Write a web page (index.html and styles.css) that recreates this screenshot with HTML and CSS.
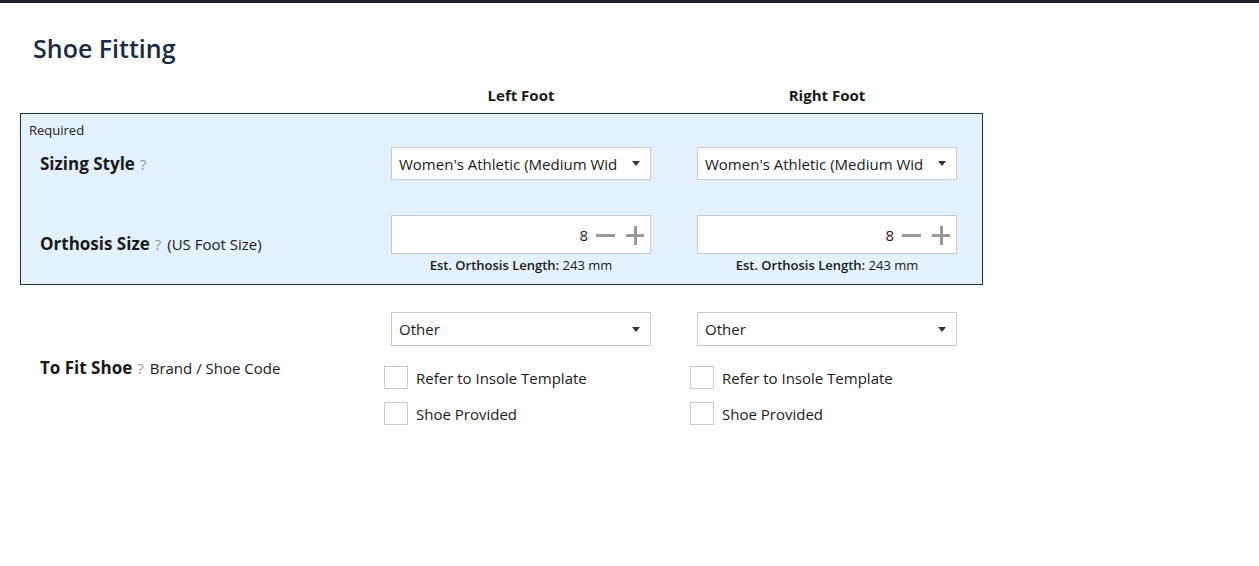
FILE: index.html
```html
<!DOCTYPE html>
<html>
<head>
<meta charset="utf-8">
<title>Shoe Fitting</title>
<link rel="stylesheet" href="styles.css">
</head>
<body>
<div class="topbar"></div>
<div class="page">
  <h1 class="title">Shoe Fitting</h1>
  <div class="grid headers">
    <div></div>
    <div class="colhead">Left Foot</div>
    <div class="colhead">Right Foot</div>
  </div>
  <div class="required-box">
    <div class="req-label">Required</div>
    <div class="grid row-sizing">
      <div class="label"><b>Sizing Style</b><span class="q">?</span></div>
      <div class="select"><span class="sel-text">Women's Athletic (Medium Width)</span><span class="arrow"></span></div>
      <div class="select"><span class="sel-text">Women's Athletic (Medium Width)</span><span class="arrow"></span></div>
    </div>
    <div class="grid row-size">
      <div class="label size-label"><b>Orthosis Size</b><span class="q">?</span><span class="sub">(US Foot Size)</span></div>
      <div class="size-cell">
        <div class="stepper"><span class="num">8</span><span class="minus"></span><span class="plus"></span></div>
        <div class="est"><b>Est. Orthosis Length:</b> 243 mm</div>
      </div>
      <div class="size-cell">
        <div class="stepper"><span class="num">8</span><span class="minus"></span><span class="plus"></span></div>
        <div class="est"><b>Est. Orthosis Length:</b> 243 mm</div>
      </div>
    </div>
  </div>
  <div class="grid row-shoe">
    <div class="label"><b>To Fit Shoe</b><span class="q">?</span><span class="sub">Brand / Shoe Code</span></div>
    <div class="shoe-cell">
      <div class="select tall"><span class="sel-text">Other</span><span class="arrow"></span></div>
      <label class="check first"><span class="box"></span>Refer to Insole Template</label>
      <label class="check"><span class="box"></span>Shoe Provided</label>
    </div>
    <div class="shoe-cell">
      <div class="select tall"><span class="sel-text">Other</span><span class="arrow"></span></div>
      <label class="check first"><span class="box"></span>Refer to Insole Template</label>
      <label class="check"><span class="box"></span>Shoe Provided</label>
    </div>
  </div>
</div>
</body>
</html>
```
FILE: styles.css
```css
* { box-sizing: border-box; }
html, body { margin: 0; padding: 0; background: #fff; }
body {
  font-family: "Segoe UI", "Open Sans", "Noto Sans", sans-serif;
  color: #1a1a1a;
  font-size: 15px;
}
.topbar { height: 3px; background: #1c2232; }
.page { padding-left: 20px; }
.title {
  margin: 29px 0 0 13px;
  font-size: 25px;
  line-height: 32px;
  font-weight: 600;
  color: #1b2b40;
}
.grid {
  display: grid;
  grid-template-columns: 324px 260px 260px;
  column-gap: 46px;
}
.headers { margin-top: 21px; padding-left: 1px; height: 20px; margin-bottom: 8px; }
.colhead { text-align: center; font-weight: 700; font-size: 15px; line-height: 20px; }
.required-box {
  width: 963px;
  border: 1px solid #1b2f47;
  background: #e4f0fa;
  padding: 8px 0 11px 0;
}
.req-label { font-size: 13px; line-height: 16px; padding-left: 8px; color: #222; }
.row-sizing { margin-top: 9px; align-items: center; }
.label { padding-left: 19px; font-size: 17px; display: flex; align-items: baseline; white-space: nowrap; }
.label b { font-weight: 700; }
.q { color: #999; font-size: 15px; margin-left: 5px; }
.sub { font-size: 15px; margin-left: 6px; }
.select {
  height: 33px;
  background: #fff;
  border: 1px solid #ccc;
  display: flex;
  align-items: center;
  padding: 0 10px 0 7px;
  font-size: 15px;
}
.select.tall { height: 34px; }
.sel-text { flex: 1; white-space: nowrap; overflow: hidden; }
.arrow {
  width: 0; height: 0;
  border-left: 4.5px solid transparent;
  border-right: 4.5px solid transparent;
  border-top: 5px solid #333;
  margin-left: 15px;
}
.row-size { margin-top: 35px; }
.size-label { align-self: start; margin-top: 17px; }
.stepper {
  height: 39px;
  background: #fff;
  border: 1px solid #ccc;
  display: flex;
  align-items: center;
  justify-content: flex-end;
  padding-right: 5px;
}
.num { font-size: 15px; margin-right: 8px; }
.minus { width: 19px; height: 18px; position: relative; margin-right: 10px; }
.minus::before {
  content: ""; position: absolute; left: 0; right: 0; top: 8px; height: 3px; background: #999;
}
.plus { width: 20px; height: 20px; position: relative; }
.plus::before {
  content: ""; position: absolute; left: 1px; right: 1px; top: 9px; height: 3px; background: #999;
}
.plus::after {
  content: ""; position: absolute; top: 1px; bottom: 0px; left: 9px; width: 3px; background: #999;
}
.est { text-align: center; font-size: 13px; line-height: 16px; margin-top: 3px; }
.est b { font-weight: 600; }
.row-shoe { margin-top: 27px; padding-left: 1px; }
.row-shoe .label { align-self: center; margin-top: -3px; }
.shoe-cell { display: flex; flex-direction: column; }
.check {
  display: flex; align-items: center; margin-left: -7px; font-size: 15px; height: 23px;
}
.check.first { margin-top: 20px; }
.check + .check { margin-top: 13px; }
.box {
  width: 24px; height: 23px; border: 1px solid #ccc; background: #fff; margin-right: 8px;
}
```
